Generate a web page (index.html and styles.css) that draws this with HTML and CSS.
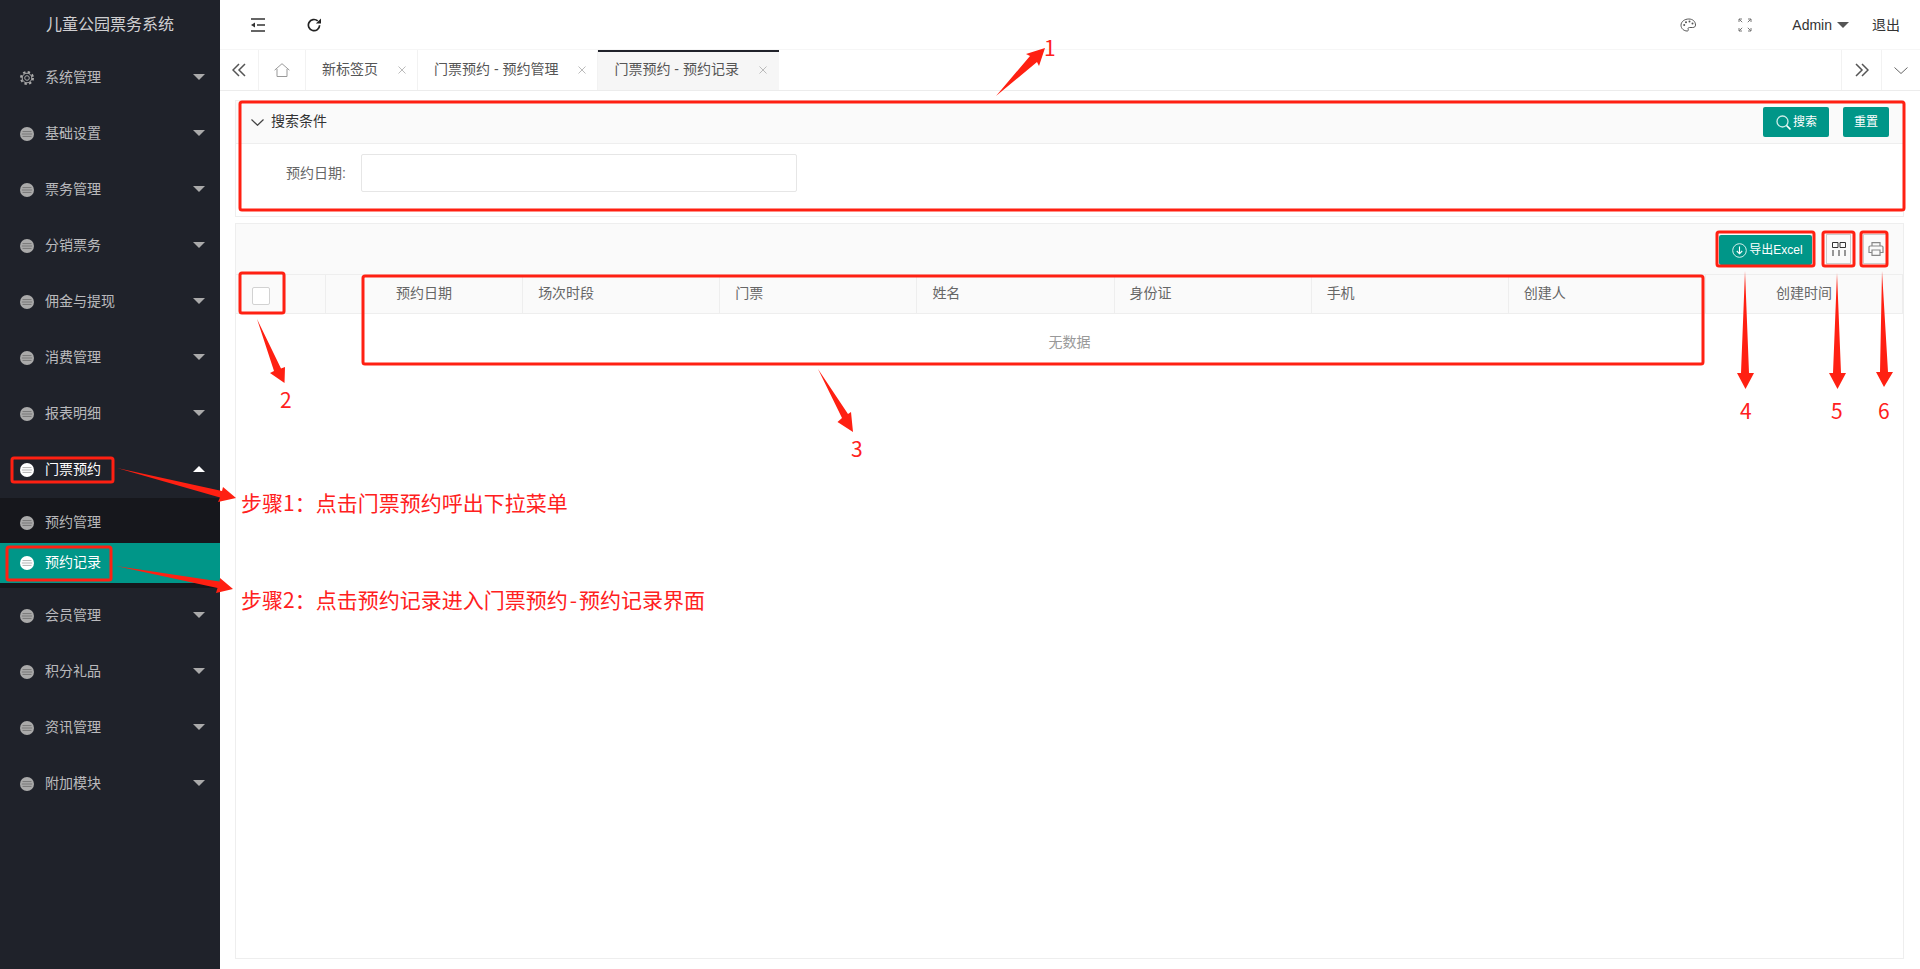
FILE: index.html
```html
<!DOCTYPE html>
<html lang="zh-CN">
<head>
<meta charset="utf-8">
<title>儿童公园票务系统</title>
<link rel="stylesheet" href="styles.css">
</head>
<body>
<svg class="defs" width="0" height="0" aria-hidden="true">
  <symbol id="i-disk" viewBox="0 0 14 14">
    <circle cx="7" cy="7" r="7" fill="currentColor"/>
    <path d="M2.500 4.600h9M1.800 7h10.400M2.500 9.400h9" stroke="#000" stroke-opacity=".3" stroke-width="1" fill="none"/>
  </symbol>
  <symbol id="i-gear" viewBox="0 0 14 14">
    <g fill="none" stroke="currentColor">
      <circle cx="7" cy="7" r="4.800" stroke-width="1"/>
      <circle cx="7" cy="7" r="6" stroke-width="2" stroke-dasharray="2.400 2.310"/>
      <circle cx="7" cy="7" r="2.300" stroke-width="1"/>
    </g>
  </symbol>
  <symbol id="i-close" viewBox="0 0 8 8">
    <path d="M.5.5l7 7M7.5.5l-7 7" stroke="currentColor" fill="none"/>
  </symbol>
</svg>

<div class="app">
  <aside class="side">
    <div class="logo">儿童公园票务系统</div>
    <nav class="menu">
      <div class="item"><svg class="ico"><use href="#i-gear"/></svg><span class="lbl">系统管理</span><i class="tri"></i></div>
      <div class="item"><svg class="ico"><use href="#i-disk"/></svg><span class="lbl">基础设置</span><i class="tri"></i></div>
      <div class="item"><svg class="ico"><use href="#i-disk"/></svg><span class="lbl">票务管理</span><i class="tri"></i></div>
      <div class="item"><svg class="ico"><use href="#i-disk"/></svg><span class="lbl">分销票务</span><i class="tri"></i></div>
      <div class="item"><svg class="ico"><use href="#i-disk"/></svg><span class="lbl">佣金与提现</span><i class="tri"></i></div>
      <div class="item"><svg class="ico"><use href="#i-disk"/></svg><span class="lbl">消费管理</span><i class="tri"></i></div>
      <div class="item"><svg class="ico"><use href="#i-disk"/></svg><span class="lbl">报表明细</span><i class="tri"></i></div>
      <div class="item open"><svg class="ico"><use href="#i-disk"/></svg><span class="lbl">门票预约</span><i class="tri up"></i></div>
      <div class="sub">
        <div class="subitem"><svg class="ico"><use href="#i-disk"/></svg><span class="lbl">预约管理</span></div>
        <div class="subitem on"><svg class="ico"><use href="#i-disk"/></svg><span class="lbl">预约记录</span></div>
      </div>
      <div class="item"><svg class="ico"><use href="#i-disk"/></svg><span class="lbl">会员管理</span><i class="tri"></i></div>
      <div class="item"><svg class="ico"><use href="#i-disk"/></svg><span class="lbl">积分礼品</span><i class="tri"></i></div>
      <div class="item"><svg class="ico"><use href="#i-disk"/></svg><span class="lbl">资讯管理</span><i class="tri"></i></div>
      <div class="item"><svg class="ico"><use href="#i-disk"/></svg><span class="lbl">附加模块</span><i class="tri"></i></div>
    </nav>
  </aside>

  <main class="main">
    <header class="top">
      <div class="top-l">
        <svg class="ti-menu" viewBox="0 0 16 14"><path d="M1 1h14M7 7h8M1 13h14" stroke="#333" stroke-width="1.500" fill="none"/><path d="M1 7l4-2.600v5.200z" fill="#333"/></svg>
        <svg class="ti-ref" viewBox="0 0 15 14"><path d="M12.600 7.200a5.600 5.600 0 1 1-1.900-4.300" stroke="#222" stroke-width="1.700" fill="none"/><path d="M14 .4v5.200H8.900z" fill="#222"/></svg>
      </div>
      <div class="top-r">
        <svg class="ti-pal" viewBox="0 0 17 14"><path d="M8.800 1C4.600 1 1 3.600 1 7.200 1 10.600 4 13 7 13c1.400 0 1.600-.9 1.200-1.700-.5-1 .1-1.800 1.200-1.800h3.300c1.800 0 2.800-1 2.800-2.400C15.500 3.500 12.800 1 8.800 1z" fill="none" stroke="#555" stroke-width="1"/><circle cx="4.200" cy="7" r="1" fill="#555"/><circle cx="6" cy="4.200" r="1" fill="#555"/><circle cx="9.500" cy="3.500" r="1" fill="#555"/><circle cx="12.500" cy="5.500" r="1" fill="#555"/></svg>
        <svg class="ti-full" viewBox="0 0 14 14"><path d="M1 4V1h3M1 1l3.200 3.200M10 1h3v3M13 1L9.800 4.200M1 10v3h3M1 13l3.200-3.200M13 10v3h-3M13 13L9.800 9.800" stroke="#777" stroke-width="1" fill="none"/></svg>
        <span class="admin">Admin</span><i class="caret"></i>
        <span class="exit">退出</span>
      </div>
    </header>

    <div class="tabs">
      <div class="tab-btn"><svg class="chev2" viewBox="0 0 14 14"><path d="M7 1L1 7l6 6M13 1L7 7l6 6" stroke="#555" stroke-width="1.500" fill="none"/></svg></div>
      <div class="tab-home"><svg class="home" viewBox="0 0 16 14"><path d="M.6 7.200L8 .7l7.400 6.500M3 6v7.500h10V6" stroke="#999" stroke-width="1" fill="none"/></svg></div>
      <div class="tab"><span>新标签页</span><svg class="x"><use href="#i-close"/></svg></div>
      <div class="tab"><span>门票预约 - 预约管理</span><svg class="x"><use href="#i-close"/></svg></div>
      <div class="tab active"><span>门票预约 - 预约记录</span><svg class="x"><use href="#i-close"/></svg></div>
      <div class="tabs-fill"></div>
      <div class="tab-btn left"><svg class="chev2" viewBox="0 0 14 14"><path d="M1 1l6 6-6 6M7 1l6 6-6 6" stroke="#555" stroke-width="1.500" fill="none"/></svg></div>
      <div class="tab-btn left last"><svg class="chev" viewBox="0 0 14 7"><path d="M.5.5L7 6.500 13.500.5" stroke="#666" stroke-width="1" fill="none"/></svg></div>
    </div>

    <div class="content">
      <section class="panel search">
        <div class="s-head">
          <svg class="s-chev" viewBox="0 0 13 7"><path d="M.5.5L6.500 6.300 12.500.5" stroke="#444" stroke-width="1.200" fill="none"/></svg>
          <span class="s-title">搜索条件</span>
          <button class="btn s-btn"><svg class="b-search" viewBox="0 0 15 15"><circle cx="6.500" cy="6.500" r="5.500" fill="none" stroke="#cfeeea" stroke-width="1.300"/><path d="M10.500 10.500l4 4" stroke="#fff" stroke-width="1.600"/></svg>搜索</button>
          <button class="btn r-btn">重置</button>
        </div>
        <div class="s-body">
          <label class="s-label">预约日期:</label>
          <div class="s-input"></div>
        </div>
      </section>

      <section class="panel table">
        <div class="toolbar">
          <button class="btn x-btn"><svg class="b-down" viewBox="0 0 15 15"><circle cx="7.500" cy="7.500" r="6.800" fill="none" stroke="#d6f0ec" stroke-width="1"/><path d="M7.500 3.500v7M4.800 8l2.700 2.800L10.200 8" fill="none" stroke="#fff" stroke-width="1.100"/></svg>导出Excel</button>
          <div class="tool cols"><svg class="t-cols" viewBox="0 0 14 14"><path d="M.5.5h5.500v5H.5zM8 .5h5.500v5H8zM1 8v6M7 8v6M13 8v6" fill="none" stroke="#333" stroke-width="1"/></svg></div>
          <div class="tool"><svg class="t-print" viewBox="0 0 16 14"><path d="M4 4V.7h8V4M3.500 10.500H1V5.200C1 4.500 1.500 4 2.200 4h11.600c.7 0 1.200.5 1.200 1.200v5.300h-2.500M4 8h8v5.300H4z" fill="none" stroke="#888" stroke-width="1.200"/></svg></div>
        </div>
        <div class="thead">
          <div class="th center"><span class="check"></span></div>
          <div class="th"></div>
          <div class="th center">预约日期</div>
          <div class="th">场次时段</div>
          <div class="th">门票</div>
          <div class="th">姓名</div>
          <div class="th">身份证</div>
          <div class="th">手机</div>
          <div class="th">创建人</div>
          <div class="th center">创建时间</div>
        </div>
        <div class="empty">无数据</div>
      </section>
    </div>
  </main>
</div>

<svg class="marks" viewBox="0 0 1920 969" aria-hidden="true">
  <g class="boxes">
    <rect x="240" y="102" width="1664" height="108" rx="2"/>
    <rect x="240" y="273" width="44" height="40" rx="2"/>
    <rect x="363" y="276" width="1340" height="88" rx="2"/>
    <rect x="1717" y="232" width="97" height="34" rx="2"/>
    <rect x="1823" y="232" width="31" height="34" rx="2"/>
    <rect x="1861" y="232" width="26" height="34" rx="2"/>
    <rect x="12" y="458" width="101" height="24" rx="2"/>
    <rect x="7" y="547" width="104" height="33" rx="2"/>
  </g>
  <g class="arrows">
    <polygon points="996,96 1030,56 1026,54 1045,48 1039,66 1037,62"/>
    <polygon points="117,468 222,491 223,487 236,498 218,502 220,497.500"/>
    <polygon points="116,566 219.500,581.500 220,578 233,589 216,593 217.500,588"/>
    <polygon points="257,319 274,371 270,373 284.500,383 285,367 281,368.500"/>
    <polygon points="818,369 842,418 837.500,422 853,432 851,412 848,414"/>
    <polygon points="1745,271 1741,373 1737,373 1745.500,389 1754,373 1749,373"/>
    <polygon points="1837,273 1833,373 1829,373 1837.500,389 1846,373 1841,373"/>
    <polygon points="1882,271 1880,372 1876,372 1884,387 1893,372 1888,372"/>
  </g>
</svg>
<div class="note n1">1</div>
<div class="note n2">2</div>
<div class="note n3">3</div>
<div class="note n4">4</div>
<div class="note n5">5</div>
<div class="note n6">6</div>
<div class="note step1">步骤1：点击门票预约呼出下拉菜单</div>
<div class="note step2">步骤2：点击预约记录进入门票预约<span class="dash">-</span>预约记录界面</div>
</body>
</html>
```

FILE: styles.css
```css
* { box-sizing: border-box; }
html, body { margin: 0; height: 100%; overflow: hidden; }
body {
  position: relative;
  background: #fff;
  color: #333;
  font: 14px/1.4 "Liberation Sans", "Noto Sans CJK SC", sans-serif;
}
.defs { position: absolute; }
.app { display: flex; height: 969px; }

/* sidebar */
.side { width: 220px; flex: none; background: #1f222a; color: rgba(255,255,255,.7); }
.logo {
  height: 50px; display: flex; align-items: center; justify-content: center;
  font-size: 16px; color: rgba(255,255,255,.8);
}
.item, .subitem { display: flex; align-items: center; padding: 0 15px 0 20px; }
.item { height: 56px; }
.subitem { height: 40px; }
.ico { width: 14px; height: 14px; margin-right: 11px; flex: none; color: #aaa; }
.lbl { flex: 1; }
.tri { width: 0; height: 0; border: 6px solid transparent; border-top: 6px solid #aaa; border-bottom: 0; margin-top: -3px; }
.tri.up { border-top: 0; border-bottom: 6px solid #fff; }
.open, .open .ico { color: #fff; }
.sub { background: #16171c; padding: 5px 0; }
.on { background: #009688; color: #fff; }
.on .ico { color: #fff; }

/* top bar */
.main { flex: 1; min-width: 0; display: flex; flex-direction: column; }
.top { height: 50px; flex: none; display: flex; align-items: center; justify-content: space-between; border-bottom: 1px solid #f6f6f6; }
.top-l { display: flex; align-items: center; padding-left: 30px; }
.ti-menu { width: 16px; height: 14px; margin-right: 41px; }
.ti-ref { width: 15px; height: 14px; }
.top-r { display: flex; align-items: center; padding-right: 20px; }
.ti-pal { width: 17px; height: 14px; margin-right: 41px; }
.ti-full { width: 14px; height: 14px; margin-right: 40px; }
.admin, .exit { color: #333; padding-top: 2px; }
.caret { width: 0; height: 0; border: 6px solid transparent; border-top: 6px solid #555; border-bottom: 0; margin: 0 23px 0 5px; }

/* tabs */
.tabs { height: 41px; flex: none; display: flex; border-bottom: 1px solid #ececec; color: #555; }
.tab-btn, .tab-home { display: flex; align-items: center; justify-content: center; flex: none; border-right: 1px solid #f2f2f2; }
.tab-btn { width: 39px; }
.tab-home { width: 47px; }
.tab-btn.left { width: 40px; border-right: 0; border-left: 1px solid #f2f2f2; }
.tab-btn.last { width: 39px; }
.chev2 { width: 14px; height: 14px; }
.chev { width: 14px; height: 7px; }
.home { width: 16px; height: 14px; }
.tab { display: flex; align-items: center; padding: 0 11px 0 16px; flex: none; border-right: 1px solid #f2f2f2; }
.tab .x { width: 8px; height: 8px; margin-left: 20px; color: #bbb; }
.tab.active { background: #f6f6f6; border-top: 2px solid #20222a; border-right: 0; padding-bottom: 2px; padding-right: 12px; }
.tabs-fill { flex: 1; }

/* content */
.content { flex: 1; min-height: 0; display: flex; flex-direction: column; gap: 6px; padding: 9px 16px 10px 15px; }
.panel { border: 1px solid #eee; background: #fff; }
.search { flex: none; height: 117px; }
.s-head { height: 43px; display: flex; align-items: center; background: #fafafa; border-bottom: 1px solid #eee; padding: 0 14px 0 15px; }
.s-chev { width: 13px; height: 7px; margin-right: 7px; }
.s-title { flex: 1; color: #333; }
.btn {
  display: inline-flex; align-items: center; justify-content: center; height: 30px; padding: 0;
  border: 0; border-radius: 2px; background: #009688; color: #fff; font: inherit; font-size: 12px;
}
.s-btn { width: 66px; margin-right: 14px; padding-left: 1px; }
.r-btn { width: 46px; }
.b-search { width: 15px; height: 15px; margin-right: 2px; }
.s-body { display: flex; align-items: flex-start; padding-top: 10px; }
.s-label { width: 110px; text-align: right; line-height: 38px; color: #666; }
.s-input { width: 436px; height: 38px; margin-left: 15px; border: 1px solid #e6e6e6; border-radius: 2px; background: #fff; }

.table { flex: 1; min-height: 0; }
.toolbar { height: 51px; display: flex; justify-content: flex-end; align-items: flex-start; padding: 10px 15px 0 0; background: #fafafa; border-bottom: 1px solid #eee; }
.x-btn { width: 93px; margin-top: 1px; margin-right: 14px; padding-left: 4px; }
.b-down { width: 15px; height: 15px; margin-right: 2px; }
.tool { width: 25px; height: 30px; border: 1px solid #ccc; display: flex; align-items: center; justify-content: center; }
.cols { margin-right: 12px; }
.t-cols { width: 14px; height: 14px; }
.t-print { width: 16px; height: 14px; }
.thead { display: grid; grid-template-columns: 50px 40px repeat(8, 1fr); height: 39px; background: #fafafa; border-bottom: 1px solid #eee; color: #666; }
.th { display: flex; align-items: center; padding: 0 15px; border-right: 1px solid #eee; }
.th.center { justify-content: center; }
.check { width: 18px; height: 18px; margin-top: 3px; border: 1px solid #d2d2d2; border-radius: 2px; background: #fff; flex: none; }
.empty { height: 58px; display: flex; align-items: center; justify-content: center; color: #999; }

/* annotations over the page */
.marks { position: absolute; left: 0; top: 0; width: 1920px; height: 969px; pointer-events: none; }
.boxes rect { fill: none; stroke: #ff2012; stroke-width: 3; }
.arrows polygon { fill: #ff2012; }
.note {
  position: absolute; color: #ff2020; font-family: "Noto Sans CJK SC", sans-serif;
  font-size: 21px; line-height: 26px; white-space: nowrap;
}
.n1 { left: 1044px; top: 34px; }
.n2 { left: 280px; top: 386px; }
.n3 { left: 851px; top: 435px; }
.n4 { left: 1740px; top: 397px; }
.n5 { left: 1831px; top: 397px; }
.n6 { left: 1878px; top: 397px; }
.step1 { left: 241px; top: 489px; }
.step2 { left: 241px; top: 586px; }
.dash { margin: 0 2px; }
```
